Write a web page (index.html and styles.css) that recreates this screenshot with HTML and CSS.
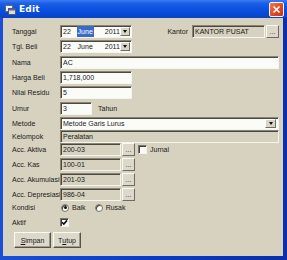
FILE: index.html
```html
<!DOCTYPE html>
<html>
<head>
<meta charset="utf-8">
<link rel="stylesheet" href="styles.css">
</head>
<body>
<div class="window">
  <div class="titlebar">
    <svg class="appicon" width="11" height="11" viewBox="0 0 11 11">
      <rect x="0.5" y="1.5" width="7" height="6" fill="#f4f4f4" stroke="#6a6a6a"/>
      <rect x="3.5" y="4.5" width="7" height="6" fill="#dcdcdc" stroke="#5a5a5a"/>
      <rect x="4" y="5" width="6" height="1.5" fill="#3a6ad8"/>
    </svg>
    <span class="title">Edit</span>
    <div class="close">
      <svg width="9" height="9" viewBox="0 0 9 9"><path d="M1.5 1.5 L7.5 7.5 M7.5 1.5 L1.5 7.5" stroke="#fff" stroke-width="1.6"/></svg>
    </div>
  </div>
  <div class="client">
    <div class="row m2">
      <span class="lbl">Tanggal</span>
      <div class="field date"><span class="d">22</span><span class="mon sel">June</span><span class="yr">2011</span><span class="drop"><i></i></span></div>
      <span class="lbl2">Kantor</span>
      <div class="field ro kantor">KANTOR PUSAT</div>
      <div class="btn dots">...</div>
    </div>
    <div class="row m3">
      <span class="lbl">Tgl. Beli</span>
      <div class="field date"><span class="d">22</span><span class="mon">June</span><span class="yr">2011</span><span class="drop"><i></i></span></div>
    </div>
    <div class="row m2">
      <span class="lbl">Nama</span>
      <div class="field wide">AC</div>
    </div>
    <div class="row m2">
      <span class="lbl">Harga Beli</span>
      <div class="field mid">1,718,000</div>
    </div>
    <div class="row m3">
      <span class="lbl">Nilai Residu</span>
      <div class="field mid">5</div>
    </div>
    <div class="row m2">
      <span class="lbl">Umur</span>
      <div class="field small">3</div>
      <span class="tahun">Tahun</span>
    </div>
    <div class="row">
      <span class="lbl">Metode</span>
      <div class="field wide select">Metode Garis Lurus<span class="drop"><i></i></span></div>
    </div>
    <div class="row">
      <span class="lbl">Kelompok</span>
      <div class="field wide ro">Peralatan</div>
    </div>
    <div class="row m2">
      <span class="lbl">Acc. Aktiva</span>
      <div class="field ro acc">200-03</div>
      <div class="btn dots">...</div>
      <span class="check"></span>
      <span class="chklbl">Jurnal</span>
    </div>
    <div class="row m2">
      <span class="lbl">Acc. Kas</span>
      <div class="field ro acc">100-01</div>
      <div class="btn dots">...</div>
    </div>
    <div class="row m2">
      <span class="lbl">Acc. Akumulasi</span>
      <div class="field ro acc">201-03</div>
      <div class="btn dots">...</div>
    </div>
    <div class="row">
      <span class="lbl">Acc. Depresiasi</span>
      <div class="field ro acc">986-04</div>
      <div class="btn dots">...</div>
    </div>
    <div class="row m2">
      <span class="lbl">Kondisi</span>
      <span class="radio on"></span><span class="rlbl">Baik</span>
      <span class="radio"></span><span class="rlbl">Rusak</span>
    </div>
    <div class="row">
      <span class="lbl">Aktif</span>
      <span class="check checked"><svg width="7" height="7" viewBox="0 0 7 7"><path d="M1 3.2 L2.8 5 L6 1.4" stroke="#111" stroke-width="1.6" fill="none"/></svg></span>
    </div>
    <div class="buttons">
      <div class="btn push simpan"><u>S</u>impan</div>
      <div class="btn push tutup">T<u>u</u>tup</div>
    </div>
  </div>
</div>
</body>
</html>
```
FILE: styles.css
```css
* { box-sizing: border-box; }
html, body { margin: 0; padding: 0; }
body {
  width: 287px;
  height: 260px;
  overflow: hidden;
  font-family: "Liberation Sans", Arial, sans-serif;
  font-size: 7px;
  color: #1a1a1a;
}
.window {
  width: 287px;
  height: 260px;
  display: flex;
  flex-direction: column;
  background: linear-gradient(to right, #1a4fd6, #0a3cc8 50%, #0a2fa8);
}
.titlebar {
  height: 18px;
  display: flex;
  align-items: center;
  padding: 0 3px 0 5px;
  background: linear-gradient(to bottom, #3b7cf0 0%, #1b5ee6 20%, #0a52e0 50%, #0848d0 80%, #0a44c4 100%);
}
.appicon { margin-right: 3px; }
.title {
  color: #fff;
  font-weight: bold;
  font-size: 9px;
  font-family: "DejaVu Sans", sans-serif;
  letter-spacing: 0.2px;
}
.close {
  margin-left: auto;
  width: 15px;
  height: 15px;
  border: 1px solid #f4f4f4;
  border-radius: 2px;
  background: linear-gradient(135deg, #ee7a58, #dc4a22 55%, #c23b18);
  display: flex;
  align-items: center;
  justify-content: center;
}
.client {
  flex: 1;
  margin: 0 4px 4px 3px;
  background: #d7d1bf;
  padding: 7px 4px 0 9px;
  display: flex;
  flex-direction: column;
}
.row {
  display: flex;
  align-items: center;
  height: 13px;
  flex: none;
}
.m2 { margin-bottom: 2px; }
.m3 { margin-bottom: 3px; }
.lbl { width: 48px; flex: none; white-space: nowrap; }
.field {
  height: 13px;
  background: #fbfbf8;
  border: 1px solid;
  border-color: #8a8675 #f6f4ee #f6f4ee #8a8675;
  box-shadow: inset 1px 1px 0 #4a4840;
  padding: 0 0 0 2px;
  line-height: 11px;
  white-space: nowrap;
  display: flex;
  align-items: center;
  flex: none;
}
.ro { background: #d7d1bf; }
.date { width: 72px; padding-left: 2px; }
.date .d { width: 15px; }
.date .mon { padding: 0 1px; margin-right: 11px; }
.date .sel { background: #3a6ac8; color: #fff; }
.drop {
  margin-left: auto;
  width: 11px;
  height: 9px;
  margin-right: 1px;
  background: #d8d4c8;
  border: 1px solid;
  border-color: #fff #6f6c62 #6f6c62 #fff;
  display: flex;
  align-items: center;
  justify-content: center;
}
.drop i {
  width: 0;
  height: 0;
  border-left: 2.5px solid transparent;
  border-right: 2.5px solid transparent;
  border-top: 3px solid #111;
}
.lbl2 { margin-left: auto; margin-right: 4px; }
.kantor { width: 73px; }
.btn {
  background: #dcd8ca;
  border: 1px solid;
  border-color: #fbfbf6 #6e6b60 #6e6b60 #fbfbf6;
  display: flex;
  align-items: center;
  justify-content: center;
  flex: none;
}
.dots {
  width: 13px;
  height: 13px;
  margin-left: 1px;
  font-size: 7px;
  line-height: 7px;
  align-items: flex-end;
  padding-bottom: 2px;
  color: #333;
}
.wide { width: 219px; }
.mid { width: 72px; }
.small { width: 32px; }
.tahun { margin-left: 6px; }
.select { padding-right: 1px; }
.acc { width: 61px; }
.check {
  width: 9px;
  height: 9px;
  background: #fbfbf8;
  border: 1px solid;
  border-color: #7a7668 #f4f2ea #f4f2ea #7a7668;
  box-shadow: inset 1px 1px 0 #404040;
  margin-left: 3px;
  display: flex;
  align-items: center;
  justify-content: center;
  flex: none;
}
.row .lbl + .check { margin-left: 0; }
.chklbl { margin-left: 3px; }
.radio {
  width: 8px;
  height: 8px;
  border-radius: 50%;
  background: #fbfbf8;
  border: 1px solid #7a7668;
  box-shadow: inset 1px 1px 0 #404040;
  flex: none;
  margin-left: 1px;
  display: flex;
  align-items: center;
  justify-content: center;
}
.radio.on::after {
  content: "";
  width: 3px;
  height: 3px;
  border-radius: 50%;
  background: #111;
}
.rlbl { margin-left: 3px; margin-right: 8px; }
.buttons {
  display: flex;
  gap: 2px;
  margin-top: 3px;
  margin-left: 2px;
}
.push {
  height: 16px;
  border-color: #fbfbf6 #55534a #55534a #fbfbf6;
  box-shadow: inset -1px -1px 0 #9c988a;
}
.simpan { width: 37px; }
.tutup { width: 28px; }
```
